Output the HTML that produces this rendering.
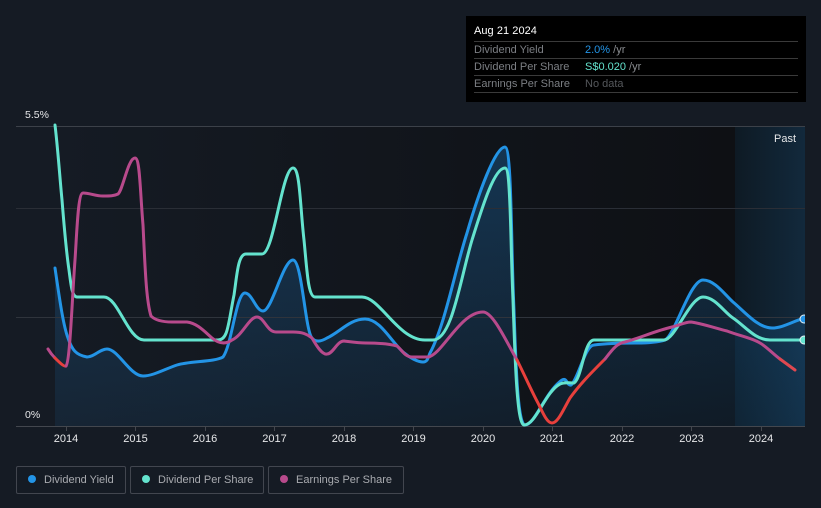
<!DOCTYPE html>
<html>
<head>
<meta charset="utf-8">
<style>
html,body{margin:0;padding:0;background:#151b24;}
body{width:821px;height:508px;position:relative;overflow:hidden;font-family:"Liberation Sans",sans-serif;}
svg{position:absolute;left:0;top:0;}
.tip{position:absolute;left:466px;top:16px;width:340px;height:86px;background:#000;}
.tip .d{position:absolute;left:8px;top:8px;font-size:11px;line-height:14px;color:#fff;letter-spacing:.05px;}
.tip .r{position:absolute;left:8px;top:25px;width:324px;height:1px;background:#3a3a3a;}
.tip .l{position:absolute;left:8px;width:324px;height:16px;border-bottom:1px solid #3a3a3a;font-size:11px;line-height:16px;color:#7c7f84;white-space:nowrap;}
.tip .v{position:absolute;left:111px;top:0;color:#8a8d91;}
.lg{position:absolute;top:466px;height:26px;border:1px solid #42464f;border-radius:2px;font-size:11px;line-height:26px;color:#a9abb0;white-space:nowrap;box-sizing:content-box;}
.lg i{position:absolute;left:11px;top:8px;width:8px;height:8px;border-radius:50%;}
.lg span{position:absolute;left:27px;top:0;}
</style>
</head>
<body>
<svg width="821" height="508" viewBox="0 0 821 508" xmlns="http://www.w3.org/2000/svg">
<defs>
<linearGradient id="bg" x1="0" y1="0" x2="1" y2="0">
<stop offset="0" stop-color="#151b24"/>
<stop offset="1" stop-color="#0e1014"/>
</linearGradient>
<linearGradient id="past" x1="0" y1="0" x2="1" y2="0">
<stop offset="0" stop-color="#0e1a24"/>
<stop offset="1" stop-color="#12293c"/>
</linearGradient>
<linearGradient id="ar" x1="0" y1="0" x2="0" y2="1">
<stop offset="0" stop-color="#2196f3" stop-opacity="0.26"/>
<stop offset="1" stop-color="#2196f3" stop-opacity="0.08"/>
</linearGradient>
<clipPath id="c"><rect x="16" y="100" width="789" height="330"/></clipPath>
</defs>
<rect x="55" y="126" width="680" height="300" fill="url(#bg)"/>
<rect x="735" y="126" width="70" height="300" fill="url(#past)"/>
<path d="M55,268 C59,295 63,325 68,338 C72,350 76,355 87,357 C94,357 100,349 107,349 C118,349 130,376 143,376 C153,376 165,369 177,365 C190,361 215,362 223,357 C232,345 236,293 245,293 C252,293 256,311 263,311 C272,311 283,260 293,260 C302,260 305,330 312,338 C316,343 322,341 327,338 C340,332 350,319 365,319 C380,319 390,340 403,352 C410,358 418,362 423,362 C428,362 428,357 430,353 C445,325 455,270 467,233 C478,195 495,147 505,147 C512,147 511,250 514,310 C516,370 518,425 525,425 C535,425 545,392 562,380 C567,377 567,386 571,385 C578,380 585,345 594,345 C610,343 625,343 637,343 C648,343 658,342 665,340 C675,335 690,280 703,280 C715,280 725,295 733,302 C745,312 758,328 772,328 C783,328 793,321 805,318 L805,426 L55,426 Z" fill="url(#ar)"/>
<g stroke-width="1" fill="none">
<path d="M16,126.5H805" stroke="#3c4149"/>
<path d="M16,208.5H805" stroke="#2a2e36"/>
<path d="M16,317.5H805" stroke="#2f343c"/>
<path d="M16,426.5H805" stroke="#43474e"/>
<path d="M66.5,426V431M135.5,426V431M205.5,426V431M274.5,426V431M344.5,426V431M413.5,426V431M483.5,426V431M552.5,426V431M622.5,426V431M691.5,426V431M761.5,426V431" stroke="#43474e"/>
</g>
<g clip-path="url(#c)" fill="none" stroke-width="3" stroke-linecap="round" stroke-linejoin="round">
<path d="M55,268 C59,295 63,325 68,338 C72,350 76,355 87,357 C94,357 100,349 107,349 C118,349 130,376 143,376 C153,376 165,369 177,365 C190,361 215,362 223,357 C232,345 236,293 245,293 C252,293 256,311 263,311 C272,311 283,260 293,260 C302,260 305,330 312,338 C316,343 322,341 327,338 C340,332 350,319 365,319 C380,319 390,340 403,352 C410,358 418,362 423,362 C428,362 428,357 430,353 C445,325 455,270 467,233 C478,195 495,147 505,147 C512,147 511,250 514,310 C516,370 518,425 525,425 C535,425 545,392 562,380 C567,377 567,386 571,385 C578,380 585,345 594,345 C610,343 625,343 637,343 C648,343 658,342 665,340 C675,335 690,280 703,280 C715,280 725,295 733,302 C745,312 758,328 772,328 C783,328 793,321 805,318" stroke="#2394e6"/>
<path d="M55,125 C58,150 60,180 62,200 C64,225 66,250 69,270 C71,285 72,297 77,297 L104,297 C118,297 128,340 144,340 L218,340 C228,340 228,325 234,295 C237,275 238,254 246,254 L262,254 C274,254 282,168 293,168 C300,168 300,205 304,240 C307,270 308,297 315,297 L362,297 C380,297 398,340 425,340 L433,340 C452,340 460,280 472,240 C482,208 494,168 505,168 C511,168 510,230 513,300 C515,360 517,425 524,425 C536,425 545,392 560,384 C565,382 570,383 574,383 C582,378 584,340 594,340 L664,340 C675,340 690,297 703,297 C715,297 724,312 733,318 C745,326 755,340 770,340 L805,340" stroke="#64e3ce"/>
<path d="M48,349 C51,354 53,356 55,358" stroke="#b84a8c"/>
<path d="M55,358 C59,362 64,367 66,366" stroke="#e8403c"/>
<path d="M66,366 C70,362 72,300 75,260 C77,230 78,193 83,193 C90,193 95,196 103,196 C110,196 114,196 118,194 C123,190 128,158 135,158 C140,158 140,190 143,225 C145,265 146,300 151,316 C155,320 162,322 172,322 L187,322 C197,323 205,332 212,338 C218,343 225,345 232,340 C243,335 249,317 257,317 C264,317 267,332 276,332 L293,332 C302,332 307,334 312,338 C316,345 322,355 327,354 C333,354 337,341 344,341 C352,342 358,343 366,343 C378,343 390,344 397,346 C402,350 405,357 412,357 L428,357 C442,355 460,312 483,312 C493,312 506,341 517,360" stroke="#b84a8c"/>
<path d="M517,360 C525,376 532,392 538,403 C543,413 547,423 552,423 C558,423 563,410 570,398 C580,384 592,372 605,359" stroke="#e8403c"/>
<path d="M605,359 C612,350 617,343 625,342 C640,338 655,331 672,327 C680,325 685,322 691,322 C700,323 715,328 727,331 C740,336 752,338 760,343 C767,347 773,354 780,359" stroke="#b84a8c"/>
<path d="M780,359 L795,370" stroke="#e04850"/>
<circle cx="804" cy="319" r="4" fill="#2394e6" stroke="#e8f0f5" stroke-width="1"/>
<circle cx="804" cy="340" r="4" fill="#64e3ce" stroke="#e8f0f5" stroke-width="1"/>
</g>
<g font-family="'Liberation Sans',sans-serif" font-size="10.500px" fill="#e6e7e9">
<text x="25" y="118">5.5%</text>
<text x="25" y="418">0%</text>
</g>
<text x="774" y="142" font-family="'Liberation Sans',sans-serif" font-size="11px" fill="#e6e7e9">Past</text>
<g font-family="'Liberation Sans',sans-serif" font-size="11px" fill="#e6e7e9" text-anchor="middle">
<text x="66" y="442">2014</text>
<text x="135.500" y="442">2015</text>
<text x="205" y="442">2016</text>
<text x="274.500" y="442">2017</text>
<text x="344" y="442">2018</text>
<text x="413.500" y="442">2019</text>
<text x="483" y="442">2020</text>
<text x="552" y="442">2021</text>
<text x="622" y="442">2022</text>
<text x="691.500" y="442">2023</text>
<text x="761" y="442">2024</text>
</g>
</svg>
<div class="tip">
<div class="d">Aug 21 2024</div>
<div class="r"></div>
<div class="l" style="top:26px;">Dividend Yield<div class="v"><span style="color:#2394e6">2.0%</span> /yr</div></div>
<div class="l" style="top:43px;">Dividend Per Share<div class="v"><span style="color:#64e3ce">S$0.020</span> /yr</div></div>
<div class="l" style="top:60px;">Earnings Per Share<div class="v" style="color:#55585c">No data</div></div>
</div>
<div class="lg" style="left:16px;width:108px;"><i style="background:#2394e6"></i><span>Dividend Yield</span></div>
<div class="lg" style="left:130px;width:132px;"><i style="background:#64e3ce"></i><span>Dividend Per Share</span></div>
<div class="lg" style="left:268px;width:134px;"><i style="background:#b84a8c"></i><span>Earnings Per Share</span></div>
</body>
</html>
